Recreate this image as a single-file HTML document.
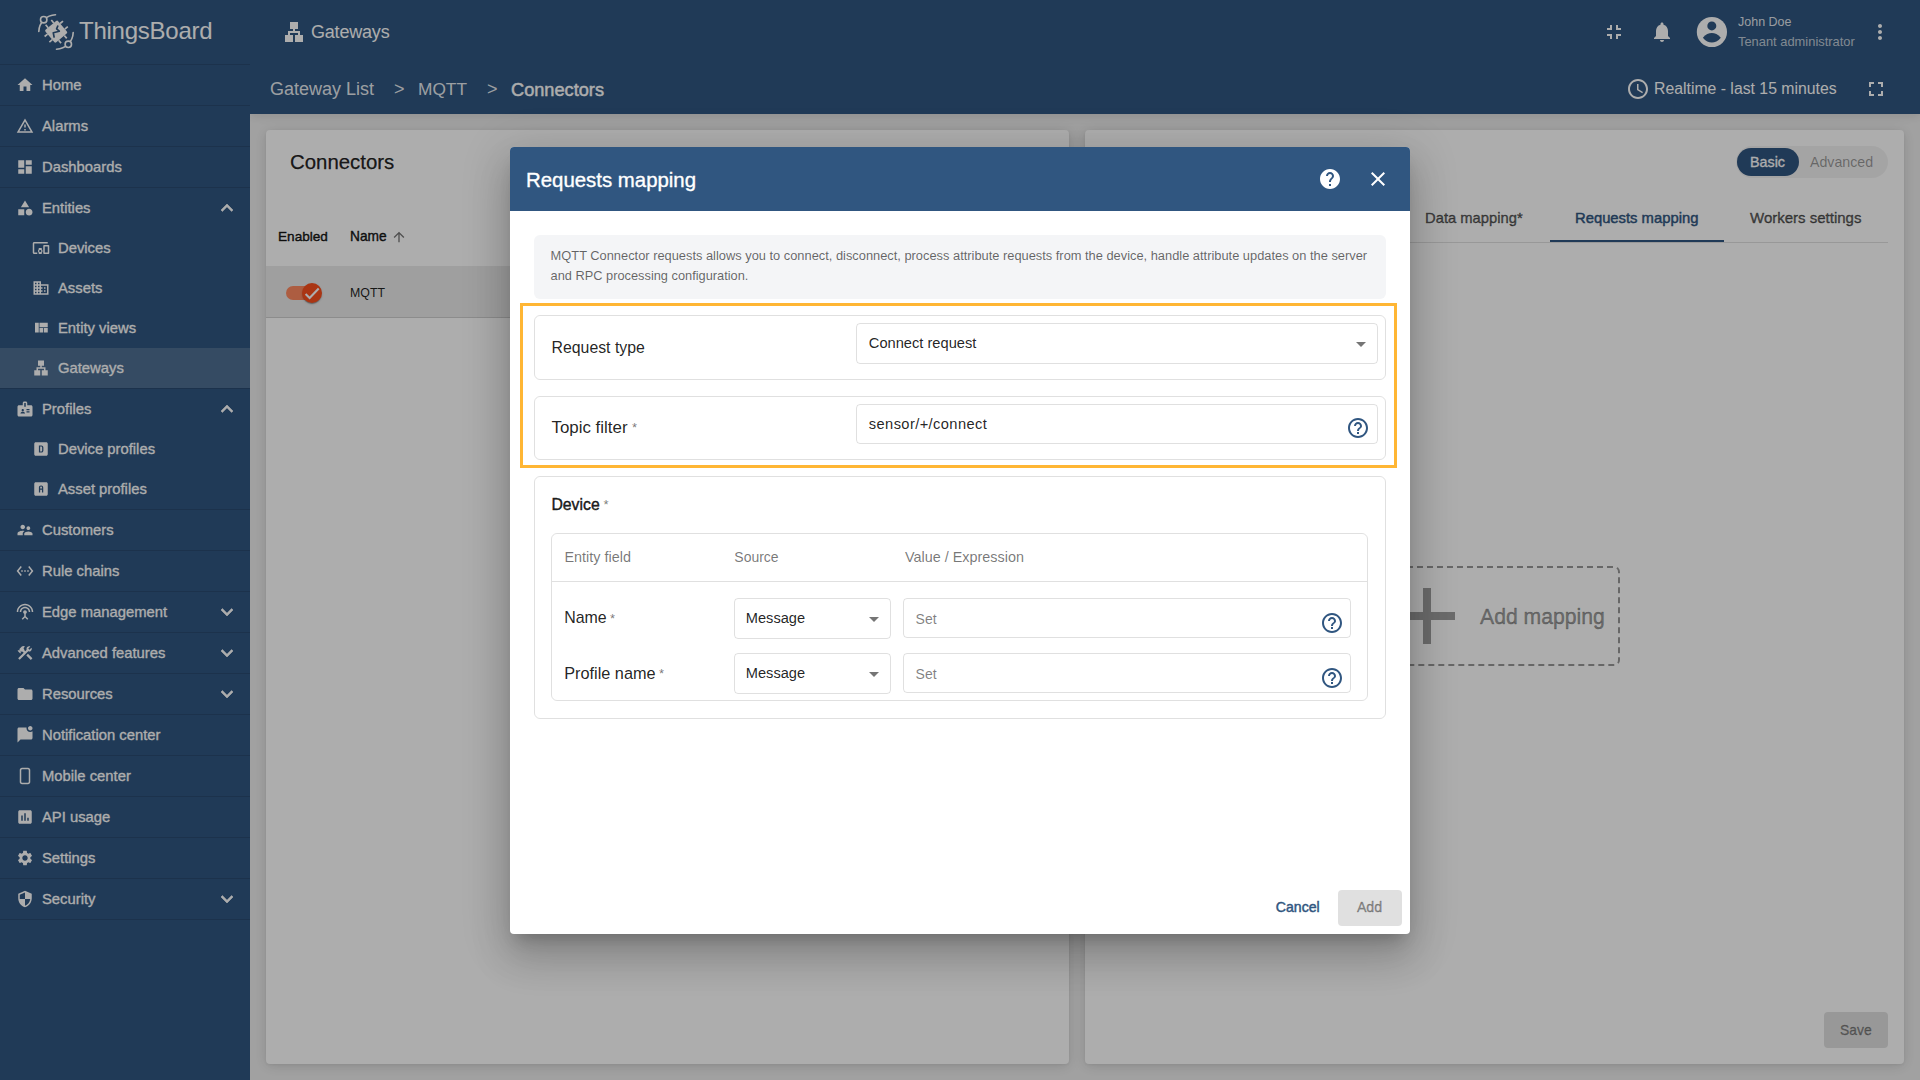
<!DOCTYPE html>
<html><head><meta charset="utf-8">
<style>
*{box-sizing:border-box;margin:0;padding:0}
html,body{width:1920px;height:1080px;overflow:hidden;font-family:"Liberation Sans",sans-serif;background:#eeeeee;position:relative}
.abs{position:absolute}
svg{display:block}
/* sidebar */
#side{position:absolute;left:0;top:0;width:250px;height:1080px;background:#305680;color:#fff;z-index:3}
#side .logo{position:absolute;left:0;top:0;width:250px;height:64px}
.sep{position:absolute;left:0;width:250px;height:1px;background:rgba(0,0,0,.12)}
.mi{position:absolute;left:0;width:250px;height:40px}
.mi .ic{position:absolute;left:16px;top:11px;width:18px;height:18px;fill:#fff}
.mi.sub .ic{left:32px}
.mi .tx{position:absolute;left:42px;top:0;line-height:40px;font-size:14.8px;white-space:nowrap;-webkit-text-stroke:.3px #fff}
.mi.sub .tx{left:58px}
.mi .ex{position:absolute;left:215px;top:8px;width:24px;height:24px;fill:#fff;stroke:#fff;stroke-width:.6}
.mi.sel{background:rgba(255,255,255,.15)}
/* header */
#top{position:absolute;left:250px;top:0;width:1670px;height:114px;background:#305680;color:#fff;box-shadow:0 2px 10px rgba(0,0,0,.11);z-index:2}
.card{position:absolute;background:#fff;border-radius:4px;box-shadow:0 2px 14px rgba(0,0,0,.13),0 1px 3px rgba(0,0,0,.06)}
#overlay{position:absolute;left:0;top:0;width:1920px;height:1080px;background:rgba(0,0,0,.32);z-index:10}
#dlg{position:absolute;left:510px;top:147px;width:900px;height:787px;background:#fff;border-radius:4px;z-index:11;box-shadow:0 11px 15px -7px rgba(0,0,0,.2),0 24px 38px 3px rgba(0,0,0,.14),0 9px 46px 8px rgba(0,0,0,.12);overflow:hidden}
</style></head><body>

<div id="side">
  <div class="logo">
<svg class="abs" style="left:34px;top:10px" width="44" height="44" viewBox="0 0 44 44">
<g fill="none" stroke="#fff" stroke-width="1.6" stroke-linecap="round">
<path d="M4.8 21.5A17.3 17.3 0 0 1 21.5 4.8"/><path d="M39.2 22.5A17.3 17.3 0 0 1 22.5 39.2"/>
</g>
<circle cx="9.7" cy="9.7" r="3.2" fill="#305680" stroke="#fff" stroke-width="1.6"/>
<circle cx="34.3" cy="34.3" r="3.2" fill="#305680" stroke="#fff" stroke-width="1.6"/>
<g transform="rotate(50 22.2 21.6)">
<rect x="13.95" y="13.35" width="16.5" height="16.5" rx="1.5" fill="#fff"/>
<g stroke="#fff" stroke-width="1.7">
<path d="M18.5 13.4v-3.8M25.9 13.4v-3.8M18.5 29.8v3.8M25.9 29.8v3.8M14 17.9h-3.8M14 25.3h-3.8M30.4 17.9h3.8M30.4 25.3h3.8"/>
</g></g>
<path d="M24 15.5L22.6 18.9 25.3 21.2 19.3 22.8 20.2 27.7" fill="none" stroke="#305680" stroke-width="1.7" stroke-linejoin="round"/>
</svg>
<span class="abs" style="left:79px;top:16px;font-size:24px;letter-spacing:-0.25px;line-height:30px;white-space:nowrap">ThingsBoard</span>
</div>
<div class="mi top" style="top:65px"><svg class="ic" viewBox="0 0 24 24"><path d="M10 20v-6h4v6h5v-8h3L12 3 2 12h3v8z"/></svg><span class="tx">Home</span></div>
<div class="mi top" style="top:106px"><svg class="ic" viewBox="0 0 24 24"><path d="M12 5.99L19.53 19H4.47L12 5.99M12 2L1 21h22L12 2zm1 14h-2v2h2v-2zm0-6h-2v4h2v-4z"/></svg><span class="tx">Alarms</span></div>
<div class="mi top" style="top:147px"><svg class="ic" viewBox="0 0 24 24"><path d="M3 13h8V3H3v10zm0 8h8v-6H3v6zm10 0h8V11h-8v10zm0-18v6h8V3h-8z"/></svg><span class="tx">Dashboards</span></div>
<div class="mi grp" style="top:188px"><svg class="ic" viewBox="0 0 24 24"><path d="M12 2l-5.5 9h11zM17.5 13c-2.49 0-4.5 2.01-4.5 4.5s2.01 4.5 4.5 4.5 4.5-2.01 4.5-4.5-2.01-4.5-4.5-4.5zM3 21.5h8v-8H3z"/></svg><span class="tx">Entities</span><svg class="ex" viewBox="0 0 24 24"><path d="M12 8l-6 6 1.41 1.41L12 10.83l4.59 4.58L18 14z"/></svg></div>
<div class="mi sub" style="top:228px"><svg class="ic" viewBox="0 0 24 24"><path d="M3 6h18V4H3c-1.1 0-2 .9-2 2v12c0 1.1.9 2 2 2h4v-2H3V6zm10 6H9v1.78c-.61.55-1 1.33-1 2.22s.39 1.67 1 2.22V20h4v-1.78c.61-.55 1-1.34 1-2.22s-.39-1.67-1-2.22V12zm-2 5.5c-.83 0-1.5-.67-1.5-1.5s.67-1.5 1.5-1.5 1.5.67 1.5 1.5-.67 1.5-1.5 1.5zM22 8h-6c-.5 0-1 .5-1 1v10c0 .5.5 1 1 1h6c.5 0 1-.5 1-1V9c0-.5-.5-1-1-1zm-1 10h-4v-8h4v8z"/></svg><span class="tx">Devices</span></div>
<div class="mi sub" style="top:268px"><svg class="ic" viewBox="0 0 24 24"><path d="M12 7V3H2v18h20V7H12zM6 19H4v-2h2v2zm0-4H4v-2h2v2zm0-4H4V9h2v2zm0-4H4V5h2v2zm4 12H8v-2h2v2zm0-4H8v-2h2v2zm0-4H8V9h2v2zm0-4H8V5h2v2zm10 12h-8v-2h2v-2h-2v-2h2v-2h-2V9h8v10zm-2-8h-2v2h2v-2zm0 4h-2v2h2v-2z"/></svg><span class="tx">Assets</span></div>
<div class="mi sub" style="top:308px"><svg class="ic" viewBox="0 0 24 24"><path d="M10 18h5v-6h-5v6zm-6 0h5V5H4v13zm12 0h5v-6h-5v6zM10 5v6h11V5H10z"/></svg><span class="tx">Entity views</span></div>
<div class="mi sub sel" style="top:348px"><svg class="ic" viewBox="0 0 24 24"><path d="M13 22h8v-7h-3v-4h-5V9h3V2H8v7h3v2H6v4H3v7h8v-7H8v-2h8v2h-3z"/></svg><span class="tx">Gateways</span></div>
<div class="mi grp" style="top:389px"><svg class="ic" viewBox="0 0 24 24"><path d="M20 7h-5V4c0-1.1-.9-2-2-2h-2c-1.1 0-2 .9-2 2v3H4c-1.1 0-2 .9-2 2v11c0 1.1.9 2 2 2h16c1.1 0 2-.9 2-2V9c0-1.1-.9-2-2-2zM9 12c.83 0 1.5.67 1.5 1.5S9.83 15 9 15s-1.5-.67-1.5-1.5S8.17 12 9 12zm3 6H6v-.43c0-.6.36-1.15.92-1.39.64-.28 1.34-.43 2.08-.43s1.44.15 2.08.43c.55.24.92.78.92 1.39V18zm1-9h-2V4h2v5zm5 7.5h-4V15h4v1.5zm0-3h-4V12h4v1.5z"/></svg><span class="tx">Profiles</span><svg class="ex" viewBox="0 0 24 24"><path d="M12 8l-6 6 1.41 1.41L12 10.83l4.59 4.58L18 14z"/></svg></div>
<div class="mi sub" style="top:429px"><svg class="ic" viewBox="0 0 24 24"><path d="M5 3h14c1.1 0 2 .9 2 2v14c0 1.1-.9 2-2 2H5c-1.1 0-2-.9-2-2V5c0-1.1.9-2 2-2zm4.2 4.2v9.6h3.3c1.6 0 2.7-1.2 2.7-2.8v-4c0-1.6-1.1-2.8-2.7-2.8H9.2zm1.7 1.6h1.5c.7 0 1.1.5 1.1 1.2v4c0 .7-.4 1.2-1.1 1.2h-1.5V8.8z"/></svg><span class="tx">Device profiles</span></div>
<div class="mi sub" style="top:469px"><svg class="ic" viewBox="0 0 24 24"><path d="M5 3h14c1.1 0 2 .9 2 2v14c0 1.1-.9 2-2 2H5c-1.1 0-2-.9-2-2V5c0-1.1.9-2 2-2zm4.2 13.8h1.7v-3.9h2.4v3.9H15v-6.8c0-1.6-1.1-2.8-2.6-2.8h-.6c-1.5 0-2.6 1.2-2.6 2.8v6.8zm1.7-5.5v-1.3c0-.7.4-1.2 1-1.2h.4c.6 0 1 .5 1 1.2v1.3h-2.4z"/></svg><span class="tx">Asset profiles</span></div>
<div class="mi top" style="top:510px"><svg class="ic" viewBox="0 0 24 24"><path d="M16.5 12c1.38 0 2.49-1.12 2.49-2.5S17.88 7 16.5 7C15.12 7 14 8.12 14 9.5s1.12 2.5 2.5 2.5zM9 11c1.66 0 2.99-1.34 2.99-3S10.66 5 9 5C7.34 5 6 6.34 6 8s1.34 3 3 3zm7.5 3c-1.83 0-5.5.92-5.5 2.75V19h11v-2.25c0-1.83-3.67-2.75-5.5-2.75zM9 13c-2.33 0-7 1.17-7 3.5V19h7v-2.25c0-.85.33-2.34 2.37-3.47C10.5 13.1 9.66 13 9 13z"/></svg><span class="tx">Customers</span></div>
<div class="mi top" style="top:551px"><svg class="ic" viewBox="0 0 24 24"><path d="M7.77 6.76L6.23 5.48.82 12l5.41 6.52 1.54-1.28L3.42 12l4.35-5.24zM7 13h2v-2H7v2zm10-2h-2v2h2v-2zm-6 2h2v-2h-2v2zm6.77-7.52l-1.54 1.28L20.58 12l-4.35 5.24 1.54 1.28L23.18 12l-5.41-6.52z"/></svg><span class="tx">Rule chains</span></div>
<div class="mi top" style="top:592px"><svg class="ic" viewBox="0 0 24 24"><path d="M12 5c-3.87 0-7 3.13-7 7h2c0-2.76 2.24-5 5-5s5 2.24 5 5h2c0-3.87-3.13-7-7-7zm1 9.29c.88-.39 1.5-1.26 1.5-2.29 0-1.38-1.12-2.5-2.5-2.5S9.5 10.62 9.5 12c0 1.02.62 1.9 1.5 2.29v3.3L7.59 21 9 22.41l3-3 3 3L16.41 21 13 17.59v-3.3zM12 1C5.93 1 1 5.93 1 12h2c0-4.97 4.03-9 9-9s9 4.03 9 9h2c0-6.07-4.93-11-11-11z"/></svg><span class="tx">Edge management</span><svg class="ex" viewBox="0 0 24 24"><path d="M16.59 8.59L12 13.17 7.41 8.59 6 10l6 6 6-6z"/></svg></div>
<div class="mi top" style="top:633px"><svg class="ic" viewBox="0 0 24 24"><path d="M13.783 15.172l2.121-2.121 5.996 5.996-2.121 2.121zM17.5 10c1.93 0 3.5-1.57 3.5-3.5 0-.58-.16-1.12-.41-1.6l-2.7 2.7-1.49-1.49 2.7-2.7c-.48-.25-1.02-.41-1.6-.41C15.57 3 14 4.57 14 6.5c0 .41.08.8.21 1.16l-1.85 1.85-1.78-1.78.71-.71-1.41-1.41L12 3.49c-1.17-1.17-3.07-1.17-4.24 0L4.22 7.03l1.41 1.41H2.81l-.71.71 3.54 3.54.71-.71V9.15l1.41 1.41.71-.71 1.78 1.78-7.41 7.41 2.12 2.12L16.34 9.79c.36.13.75.21 1.16.21z"/></svg><span class="tx">Advanced features</span><svg class="ex" viewBox="0 0 24 24"><path d="M16.59 8.59L12 13.17 7.41 8.59 6 10l6 6 6-6z"/></svg></div>
<div class="mi top" style="top:674px"><svg class="ic" viewBox="0 0 24 24"><path d="M10 4H4c-1.1 0-1.99.9-1.99 2L2 18c0 1.1.9 2 2 2h16c1.1 0 2-.9 2-2V8c0-1.1-.9-2-2-2h-8l-2-2z"/></svg><span class="tx">Resources</span><svg class="ex" viewBox="0 0 24 24"><path d="M16.59 8.59L12 13.17 7.41 8.59 6 10l6 6 6-6z"/></svg></div>
<div class="mi top" style="top:715px"><svg class="ic" viewBox="0 0 24 24"><path d="M22 6.98V16c0 1.1-.9 2-2 2H6l-4 4V4c0-1.1.9-2 2-2h10.1c-.06.32-.1.66-.1 1 0 2.76 2.24 5 5 5 1.13 0 2.16-.39 3-1.02zM16 3c0 1.66 1.34 3 3 3s3-1.34 3-3-1.34-3-3-3-3 1.34-3 3z"/></svg><span class="tx">Notification center</span></div>
<div class="mi top" style="top:756px"><svg class="ic" viewBox="0 0 24 24"><path d="M16 1H8C6.34 1 5 2.34 5 4v16c0 1.66 1.34 3 3 3h8c1.66 0 3-1.34 3-3V4c0-1.66-1.34-3-3-3zm1 18.5c0 .83-.67 1.5-1.5 1.5h-7C7.67 21 7 20.33 7 19.5v-15C7 3.67 7.67 3 8.5 3h7c.83 0 1.5.67 1.5 1.5v15z"/></svg><span class="tx">Mobile center</span></div>
<div class="mi top" style="top:797px"><svg class="ic" viewBox="0 0 24 24"><path d="M19 3H5c-1.1 0-2 .9-2 2v14c0 1.1.9 2 2 2h14c1.1 0 2-.9 2-2V5c0-1.1-.9-2-2-2zM9 17H7v-7h2v7zm4 0h-2V7h2v10zm4 0h-2v-4h2v4z"/></svg><span class="tx">API usage</span></div>
<div class="mi top" style="top:838px"><svg class="ic" viewBox="0 0 24 24"><path d="M19.14 12.94c.04-.3.06-.61.06-.94 0-.32-.02-.64-.07-.94l2.03-1.58c.18-.14.23-.41.12-.61l-1.92-3.32c-.12-.22-.37-.29-.59-.22l-2.39.96c-.5-.38-1.03-.7-1.62-.94l-.36-2.54c-.04-.24-.24-.41-.48-.41h-3.84c-.24 0-.43.17-.47.41l-.36 2.54c-.59.24-1.13.57-1.62.94l-2.39-.96c-.22-.08-.47 0-.59.22L2.74 8.87c-.12.21-.08.47.12.61l2.03 1.58c-.05.3-.09.63-.09.94s.02.64.07.94l-2.03 1.58c-.18.14-.23.41-.12.61l1.92 3.32c.12.22.37.29.59.22l2.39-.96c.5.38 1.03.7 1.62.94l.36 2.54c.05.24.24.41.48.41h3.84c.24 0 .44-.17.47-.41l.36-2.54c.59-.24 1.13-.56 1.62-.94l2.39.96c.22.08.47 0 .59-.22l1.92-3.32c.12-.22.07-.47-.12-.61l-2.01-1.58zM12 15.6c-1.98 0-3.6-1.62-3.6-3.6s1.62-3.6 3.6-3.6 3.6 1.62 3.6 3.6-1.62 3.6-3.6 3.6z"/></svg><span class="tx">Settings</span></div>
<div class="mi top" style="top:879px"><svg class="ic" viewBox="0 0 24 24"><path d="M12 1L3 5v6c0 5.55 3.84 10.74 9 12 5.16-1.26 9-6.45 9-12V5l-9-4zm0 10.99h7c-.53 4.12-3.28 7.79-7 8.94V12H5V6.3l7-3.11v8.8z"/></svg><span class="tx">Security</span><svg class="ex" viewBox="0 0 24 24"><path d="M16.59 8.59L12 13.17 7.41 8.59 6 10l6 6 6-6z"/></svg></div>
<div class="sep" style="top:64px"></div>
<div class="sep" style="top:105px"></div>
<div class="sep" style="top:146px"></div>
<div class="sep" style="top:187px"></div>
<div class="sep" style="top:388px"></div>
<div class="sep" style="top:509px"></div>
<div class="sep" style="top:550px"></div>
<div class="sep" style="top:591px"></div>
<div class="sep" style="top:632px"></div>
<div class="sep" style="top:673px"></div>
<div class="sep" style="top:714px"></div>
<div class="sep" style="top:755px"></div>
<div class="sep" style="top:796px"></div>
<div class="sep" style="top:837px"></div>
<div class="sep" style="top:878px"></div>
<div class="sep" style="top:919px"></div>
</div>

<div id="top">
<svg class="abs" style="left:32px;top:20px;fill:#fff" width="24" height="24" viewBox="0 0 24 24"><path d="M13 22h8v-7h-3v-4h-5V9h3V2H8v7h3v2H6v4H3v7h8v-7H8v-2h8v2h-3z"/></svg>
<span class="abs" style="left:61px;top:21px;font-size:18px;letter-spacing:-0.2px;line-height:22px;white-space:nowrap">Gateways</span>
<svg class="abs" style="left:1352px;top:20px;fill:#fff" width="24" height="24" viewBox="0 0 24 24"><path d="M5 16h3v3h2v-5H5v2zm3-8H5v2h5V5H8v3zm6 11h2v-3h3v-2h-5v5zm2-11V5h-2v5h5V8h-3z"/></svg>
<svg class="abs" style="left:1400px;top:20px;fill:#fff" width="24" height="24" viewBox="0 0 24 24"><path d="M12 22c1.1 0 2-.9 2-2h-4c0 1.1.89 2 2 2zm6-6v-5c0-3.07-1.64-5.64-4.5-6.32V4c0-.83-.67-1.5-1.5-1.5s-1.5.67-1.5 1.5v.68C7.63 5.36 6 7.92 6 11v5l-2 2v1h16v-1l-2-2z"/></svg>
<svg class="abs" style="left:1446px;top:16px" width="32" height="32" viewBox="0 0 32 32"><circle cx="15.9" cy="16" r="15.1" fill="#fff"/><circle cx="15.8" cy="9.9" r="4.5" fill="#305680"/><path d="M6.9 21.7C9.5 18.3 12.9 16.9 15.8 16.9S22.1 18.3 24.8 21.7C22.1 25.1 18.7 26.5 15.8 26.5S9.5 25.1 6.9 21.7z" fill="#305680"/></svg>
<span class="abs" style="left:1488px;top:14px;font-size:12.5px;line-height:16px;white-space:nowrap;color:rgba(255,255,255,.87)">John Doe</span>
<span class="abs" style="left:1488px;top:34px;font-size:12.9px;line-height:16px;white-space:nowrap;color:rgba(255,255,255,.7)">Tenant administrator</span>
<svg class="abs" style="left:1618px;top:20px;fill:#fff" width="24" height="24" viewBox="0 0 24 24"><path d="M12 8c1.1 0 2-.9 2-2s-.9-2-2-2-2 .9-2 2 .9 2 2 2zm0 2c-1.1 0-2 .9-2 2s.9 2 2 2 2-.9 2-2-.9-2-2-2zm0 6c-1.1 0-2 .9-2 2s.9 2 2 2 2-.9 2-2-.9-2-2-2z"/></svg>
<span class="abs" style="left:20px;top:78px;font-size:18px;line-height:22px;white-space:nowrap;color:rgba(255,255,255,.9)">Gateway List</span>
<span class="abs" style="left:144px;top:78px;font-size:18px;line-height:22px;white-space:nowrap;color:rgba(255,255,255,.9)">&gt;</span>
<span class="abs" style="left:168px;top:78px;font-size:17.3px;line-height:22px;white-space:nowrap;color:rgba(255,255,255,.9)">MQTT</span>
<span class="abs" style="left:237px;top:78px;font-size:18px;line-height:22px;white-space:nowrap;color:rgba(255,255,255,.9)">&gt;</span>
<span class="abs" style="left:261px;top:78.5px;font-size:18.2px;line-height:22px;white-space:nowrap;-webkit-text-stroke:.45px #fff">Connectors</span>
<svg class="abs" style="left:1376px;top:77px;fill:#fff" width="24" height="24" viewBox="0 0 24 24"><path d="M11.99 2C6.47 2 2 6.48 2 12s4.47 10 9.99 10C17.52 22 22 17.52 22 12S17.52 2 11.99 2zM12 20c-4.42 0-8-3.58-8-8s3.58-8 8-8 8 3.58 8 8-3.58 8-8 8zm.5-13H11v6l5.25 3.15.75-1.23-4.5-2.67z"/></svg>
<span class="abs" style="left:1404px;top:79px;font-size:15.8px;line-height:20px;white-space:nowrap">Realtime - last 15 minutes</span>
<svg class="abs" style="left:1614px;top:77px;fill:#fff" width="24" height="24" viewBox="0 0 24 24"><path d="M7 14H5v5h5v-2H7v-3zm-2-4h2V7h3V5H5v5zm12 7h-3v2h5v-5h-2v3zM14 5v2h3v3h2V5h-5z"/></svg>
</div>

<div class="card" style="left:266px;top:130px;width:803px;height:934px;overflow:hidden">
<span class="abs" style="left:24px;top:20px;font-size:20.4px;line-height:24px;color:rgba(0,0,0,.87);white-space:nowrap;-webkit-text-stroke:.25px rgba(0,0,0,.87)">Connectors</span>
<span class="abs" style="left:12px;top:99px;font-size:13.6px;line-height:16px;color:rgba(0,0,0,.87);white-space:nowrap;-webkit-text-stroke:.45px rgba(0,0,0,.87)">Enabled</span>
<span class="abs" style="left:84px;top:99px;font-size:13.75px;line-height:16px;color:rgba(0,0,0,.87);white-space:nowrap;-webkit-text-stroke:.45px rgba(0,0,0,.87)">Name</span>
<svg class="abs" style="left:125px;top:99px;fill:rgba(0,0,0,.54)" width="16" height="16" viewBox="0 0 24 24"><path d="M4 12l1.41 1.41L11 7.83V20h2V7.83l5.58 5.59L20 12l-8-8-8 8z"/></svg>
<div class="abs" style="left:0;top:136px;width:803px;height:52px;background:#ebebeb;border-bottom:1px solid rgba(0,0,0,.12)"></div>
<div class="abs" style="left:20px;top:156px;width:34px;height:14px;border-radius:7px;background:#ff8a61"></div>
<div class="abs" style="left:36px;top:153px;width:20px;height:20px;border-radius:50%;background:#fb4f1d;box-shadow:0 2px 1px -1px rgba(0,0,0,.2),0 1px 1px 0 rgba(0,0,0,.14),0 1px 3px 0 rgba(0,0,0,.12)"></div>
<svg class="abs" style="left:36px;top:153px" width="20" height="20" viewBox="0 0 20 20"><path d="M3.6 11.1l4 3.8 9.1-9.4" fill="none" stroke="#fff" stroke-width="2.1"/></svg>
<span class="abs" style="left:84px;top:155px;font-size:12.35px;line-height:16px;color:rgba(0,0,0,.87);white-space:nowrap">MQTT</span>
</div>
<div class="card" style="left:1085px;top:130px;width:819px;height:934px;overflow:hidden">
<div class="abs" style="left:651px;top:16px;width:152px;height:32px;border-radius:16px;background:rgba(0,0,0,.05)"></div>
<div class="abs" style="left:652px;top:18px;width:62px;height:28px;border-radius:14px;background:#305680"></div>
<span class="abs" style="left:665px;top:24px;font-size:14.3px;line-height:16px;color:#fff;white-space:nowrap;-webkit-text-stroke:.3px #fff">Basic</span>
<span class="abs" style="left:725px;top:24px;font-size:14.2px;line-height:16px;color:rgba(0,0,0,.38);white-space:nowrap">Advanced</span>
<div class="abs" style="left:0;top:112px;width:803px;height:1px;background:rgba(0,0,0,.12)"></div>
<span class="abs" style="left:340px;top:80px;font-size:14.77px;line-height:16px;color:rgba(0,0,0,.6);white-space:nowrap;-webkit-text-stroke:.45px rgba(0,0,0,.6)">Data mapping*</span>
<span class="abs" style="left:490px;top:80px;font-size:14.8px;line-height:16px;color:#305680;white-space:nowrap;-webkit-text-stroke:.45px #305680">Requests mapping</span>
<span class="abs" style="left:665px;top:80px;font-size:15px;line-height:16px;color:rgba(0,0,0,.6);white-space:nowrap;-webkit-text-stroke:.45px rgba(0,0,0,.6)">Workers settings</span>
<div class="abs" style="left:465px;top:110px;width:174px;height:2px;background:#305680"></div>
<div class="abs" style="left:286px;top:436px;width:249px;height:100px;border:2px dashed rgba(0,0,0,.4);border-radius:6px"></div>
<svg class="abs" style="left:294px;top:438px;fill:rgba(0,0,0,.38)" width="96" height="96" viewBox="0 0 24 24"><path d="M19 13h-6v6h-2v-6H5v-2h6V5h2v6h6v2z"/></svg>
<span class="abs" style="left:395px;top:475px;font-size:21.2px;line-height:24px;color:rgba(0,0,0,.38);white-space:nowrap;-webkit-text-stroke:.5px rgba(0,0,0,.38)">Add mapping</span>
<div class="abs" style="left:739px;top:882px;width:64px;height:36px;border-radius:4px;background:rgba(0,0,0,.12)"></div>
<span class="abs" style="left:755px;top:892px;font-size:13.9px;line-height:16px;color:rgba(0,0,0,.38);white-space:nowrap;-webkit-text-stroke:.45px rgba(0,0,0,.38)">Save</span>
</div>

<div id="overlay"></div>
<div id="dlg">
<div class="abs" style="left:0px;top:0px;width:900px;height:64px;background:#305680"></div>
<span class="abs" style="left:16.0px;top:20.13px;font-size:20.4px;line-height:26px;font-weight:normal;color:#fff;white-space:nowrap;-webkit-text-stroke:.35px #fff">Requests mapping</span>
<svg class="abs" style="left:808.0px;top:20.0px;fill:#fff" width="24" height="24" viewBox="0 0 24 24"><path d="M12 2C6.48 2 2 6.48 2 12s4.48 10 10 10 10-4.48 10-10S17.52 2 12 2zm1 17h-2v-2h2v2zm2.07-7.75l-.9.92C13.45 12.9 13 13.5 13 15h-2v-.5c0-1.1.45-2.1 1.17-2.83l1.24-1.26c.37-.36.59-.86.59-1.41 0-1.1-.9-2-2-2s-2 .9-2 2H8c0-2.21 1.79-4 4-4s4 1.79 4 4c0 .88-.36 1.68-.93 2.25z"/></svg>
<svg class="abs" style="left:856.0px;top:20.0px;fill:#fff" width="24" height="24" viewBox="0 0 24 24"><path d="M19 6.41L17.59 5 12 10.59 6.41 5 5 6.41 10.59 12 5 17.59 6.41 19 12 13.41 17.59 19 19 17.59 13.41 12z"/></svg>
<div class="abs" style="left:24px;top:88px;width:852px;height:64px;background:#f4f5f7;border-radius:6px"></div>
<span class="abs" style="left:40.6px;top:101.45px;font-size:12.85px;line-height:16px;font-weight:normal;color:rgba(0,0,0,.6);white-space:nowrap;">MQTT Connector requests allows you to connect, disconnect, process attribute requests from the device, handle attribute updates on the server</span>
<span class="abs" style="left:40.6px;top:121.46px;font-size:12.8px;line-height:16px;font-weight:normal;color:rgba(0,0,0,.6);white-space:nowrap;">and RPC processing configuration.</span>
<div class="abs" style="left:10px;top:156px;width:877px;height:165px;border:3px solid #ffb634"></div>
<div class="abs" style="left:24px;top:168px;width:852px;height:65px;border:1px solid rgba(0,0,0,.12);border-radius:6px"></div>
<span class="abs" style="left:41.5px;top:190.51px;font-size:15.85px;line-height:20px;font-weight:normal;color:rgba(0,0,0,.87);white-space:nowrap;">Request type</span>
<div class="abs" style="left:346px;top:176px;width:522px;height:41px;border:1px solid rgba(0,0,0,.12);border-radius:4px"></div>
<span class="abs" style="left:358.8px;top:186.72px;font-size:14.66px;line-height:18px;font-weight:normal;color:rgba(0,0,0,.87);white-space:nowrap;">Connect request</span>
<svg class="abs" style="left:846px;top:195px" width="10" height="5" viewBox="0 0 10 5"><path d="M0 0h10L5 5z" fill="rgba(0,0,0,.54)"/></svg>
<div class="abs" style="left:24px;top:249px;width:852px;height:64px;border:1px solid rgba(0,0,0,.12);border-radius:6px"></div>
<span class="abs" style="left:41.5px;top:269.54px;font-size:16.9px;line-height:21px;font-weight:normal;color:rgba(0,0,0,.87);white-space:nowrap;">Topic filter</span>
<span class="abs" style="left:122.0px;top:273.40px;font-size:13px;line-height:16px;font-weight:normal;color:rgba(0,0,0,.54);white-space:nowrap;">*</span>
<div class="abs" style="left:346px;top:257px;width:522px;height:40px;border:1px solid rgba(0,0,0,.12);border-radius:4px"></div>
<span class="abs" style="left:358.8px;top:267.92px;font-size:14.66px;line-height:18px;font-weight:normal;color:rgba(0,0,0,.87);white-space:nowrap;letter-spacing:.4px">sensor/+/connect</span>
<svg class="abs" style="left:836.0px;top:269.0px;fill:#305680" width="24" height="24" viewBox="0 0 24 24"><path d="M11 18h2v-2h-2v2zm1-16C6.48 2 2 6.48 2 12s4.48 10 10 10 10-4.48 10-10S17.52 2 12 2zm0 18c-4.41 0-8-3.59-8-8s3.59-8 8-8 8 3.59 8 8-3.59 8-8 8zm0-14c-2.21 0-4 1.79-4 4h2c0-1.1.9-2 2-2s2 .9 2 2c0 2-3 1.75-3 5h2c0-2.25 3-2.5 3-5 0-2.21-1.79-4-4-4z"/></svg>
<div class="abs" style="left:24px;top:329px;width:852px;height:243px;border:1px solid rgba(0,0,0,.12);border-radius:6px"></div>
<span class="abs" style="left:41.4px;top:348.23px;font-size:15.8px;line-height:20px;font-weight:normal;color:rgba(0,0,0,.87);white-space:nowrap;-webkit-text-stroke:.45px rgba(0,0,0,.87)">Device</span>
<span class="abs" style="left:93.4px;top:350.20px;font-size:13px;line-height:16px;font-weight:normal;color:rgba(0,0,0,.54);white-space:nowrap;">*</span>
<div class="abs" style="left:41px;top:386px;width:817px;height:168px;border:1px solid rgba(0,0,0,.12);border-radius:6px"></div>
<div class="abs" style="left:42px;top:434px;width:815px;height:1px;background:rgba(0,0,0,.12)"></div>
<span class="abs" style="left:54.5px;top:401.01px;font-size:14.4px;line-height:18px;font-weight:normal;color:rgba(0,0,0,.54);white-space:nowrap;">Entity field</span>
<span class="abs" style="left:224.3px;top:401.15px;font-size:14px;line-height:18px;font-weight:normal;color:rgba(0,0,0,.54);white-space:nowrap;">Source</span>
<span class="abs" style="left:395.0px;top:401.01px;font-size:14.4px;line-height:18px;font-weight:normal;color:rgba(0,0,0,.54);white-space:nowrap;">Value / Expression</span>
<span class="abs" style="left:54.2px;top:460.98px;font-size:15.93px;line-height:20px;font-weight:normal;color:rgba(0,0,0,.87);white-space:nowrap;">Name</span>
<span class="abs" style="left:100.0px;top:464.00px;font-size:13px;line-height:16px;font-weight:normal;color:rgba(0,0,0,.54);white-space:nowrap;">*</span>
<div class="abs" style="left:224px;top:451px;width:157px;height:41px;border:1px solid rgba(0,0,0,.12);border-radius:4px"></div>
<span class="abs" style="left:235.8px;top:461.93px;font-size:14.64px;line-height:18px;font-weight:normal;color:rgba(0,0,0,.87);white-space:nowrap;">Message</span>
<svg class="abs" style="left:359px;top:470px" width="10" height="5" viewBox="0 0 10 5"><path d="M0 0h10L5 5z" fill="rgba(0,0,0,.54)"/></svg>
<div class="abs" style="left:393px;top:451px;width:448px;height:40px;border:1px solid rgba(0,0,0,.12);border-radius:4px"></div>
<span class="abs" style="left:405.6px;top:462.65px;font-size:14px;line-height:18px;font-weight:normal;color:rgba(0,0,0,.5);white-space:nowrap;">Set</span>
<svg class="abs" style="left:810.0px;top:464.0px;fill:#305680" width="24" height="24" viewBox="0 0 24 24"><path d="M11 18h2v-2h-2v2zm1-16C6.48 2 2 6.48 2 12s4.48 10 10 10 10-4.48 10-10S17.52 2 12 2zm0 18c-4.41 0-8-3.59-8-8s3.59-8 8-8 8 3.59 8 8-3.59 8-8 8zm0-14c-2.21 0-4 1.79-4 4h2c0-1.1.9-2 2-2s2 .9 2 2c0 2-3 1.75-3 5h2c0-2.25 3-2.5 3-5 0-2.21-1.79-4-4-4z"/></svg>
<span class="abs" style="left:54.2px;top:515.85px;font-size:16.3px;line-height:20px;font-weight:normal;color:rgba(0,0,0,.87);white-space:nowrap;">Profile name</span>
<span class="abs" style="left:149.0px;top:519.00px;font-size:13px;line-height:16px;font-weight:normal;color:rgba(0,0,0,.54);white-space:nowrap;">*</span>
<div class="abs" style="left:224px;top:506px;width:157px;height:41px;border:1px solid rgba(0,0,0,.12);border-radius:4px"></div>
<span class="abs" style="left:235.8px;top:516.93px;font-size:14.64px;line-height:18px;font-weight:normal;color:rgba(0,0,0,.87);white-space:nowrap;">Message</span>
<svg class="abs" style="left:359px;top:525px" width="10" height="5" viewBox="0 0 10 5"><path d="M0 0h10L5 5z" fill="rgba(0,0,0,.54)"/></svg>
<div class="abs" style="left:393px;top:506px;width:448px;height:40px;border:1px solid rgba(0,0,0,.12);border-radius:4px"></div>
<span class="abs" style="left:405.6px;top:517.65px;font-size:14px;line-height:18px;font-weight:normal;color:rgba(0,0,0,.5);white-space:nowrap;">Set</span>
<svg class="abs" style="left:810.0px;top:519.0px;fill:#305680" width="24" height="24" viewBox="0 0 24 24"><path d="M11 18h2v-2h-2v2zm1-16C6.48 2 2 6.48 2 12s4.48 10 10 10 10-4.48 10-10S17.52 2 12 2zm0 18c-4.41 0-8-3.59-8-8s3.59-8 8-8 8 3.59 8 8-3.59 8-8 8zm0-14c-2.21 0-4 1.79-4 4h2c0-1.1.9-2 2-2s2 .9 2 2c0 2-3 1.75-3 5h2c0-2.25 3-2.5 3-5 0-2.21-1.79-4-4-4z"/></svg>
<span class="abs" style="left:765.8px;top:750.81px;font-size:14.1px;line-height:18px;font-weight:normal;color:#305680;white-space:nowrap;-webkit-text-stroke:.45px #305680">Cancel</span>
<div class="abs" style="left:828px;top:743px;width:64px;height:36px;background:rgba(0,0,0,.12);border-radius:4px"></div>
<span class="abs" style="left:846.9px;top:750.78px;font-size:14.2px;line-height:18px;font-weight:normal;color:rgba(0,0,0,.38);white-space:nowrap;-webkit-text-stroke:.45px rgba(0,0,0,.38)">Add</span>
</div>
</body></html>
